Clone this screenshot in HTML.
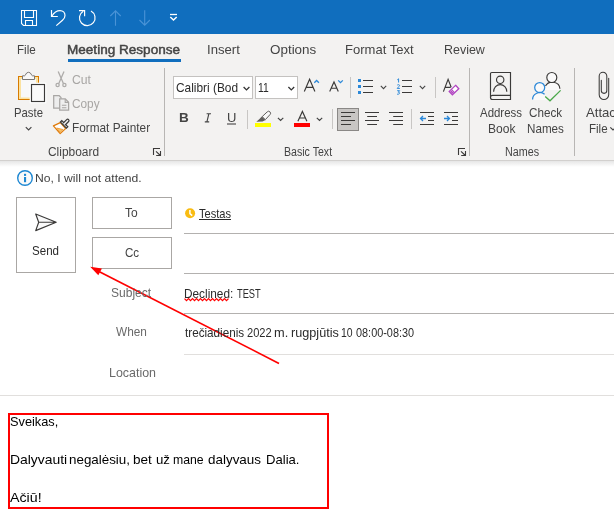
<!DOCTYPE html>
<html><head><meta charset="utf-8"><title>Meeting Response</title>
<style>
html,body{margin:0;padding:0;}
body{width:614px;height:514px;overflow:hidden;background:#fff;position:relative;font-family:"Liberation Sans",sans-serif;}
.t{position:absolute;white-space:nowrap;line-height:1;transform-origin:0 0;font-family:"Liberation Sans",sans-serif;}
.a{position:absolute;}
svg{position:absolute;overflow:visible;}
</style></head><body>
<!-- backgrounds -->
<div class="a" style="left:0;top:0;width:614px;height:34px;background:#106ebe"></div>
<div class="a" style="left:0;top:34px;width:614px;height:126px;background:#f3f2f1"></div>
<div class="a" style="left:0;top:160px;width:614px;height:1px;background:#d2d0ce"></div>
<div class="a" style="left:0;top:161px;width:614px;height:6px;background:linear-gradient(#e6e6e6,#fff)"></div>
<!-- active tab underline -->
<div class="a" style="left:68px;top:59px;width:113px;height:3px;background:#106ebe"></div>

<!-- title bar icons -->
<svg width="614" height="34" style="left:0;top:0" fill="none" stroke="#fff" stroke-width="1.1">
  <!-- save -->
  <path d="M21.5 10.5 H36.5 V25.5 H23.5 L21.5 23.5 Z"/>
  <path d="M24.5 10.5 V17.5 H33.5 V10.5"/>
  <path d="M25.5 25.5 V20.5 H32.5 V25.5"/>
  <!-- undo -->
  <path d="M51.5 10 V16.5 H57.8" stroke-width="1.2"/>
  <path d="M51.8 16.2 C54 12.5 57 10.6 60 10.6 C63 10.6 65 12.8 65 15.5 C65 17.5 64 19 62.5 20.3 L56.3 25.6" stroke-width="1.2"/>
  <!-- redo -->
  <path d="M79 10.6 H84.6 V16.2" stroke-width="1.2"/>
  <path d="M91 11 A7.8 7.8 0 1 1 83.2 11.2" stroke-width="1.2"/>
  <!-- up/down dimmed -->
  <g stroke="#4a93d6" stroke-width="1.1">
    <path d="M115.5 25.7 V10.8 M110.3 16 L115.5 10.8 L120.7 16"/>
    <path d="M144.7 10.2 V25.2 M139.5 20 L144.7 25.2 L149.9 20"/>
  </g>
  <!-- customize -->
  <path d="M170 14.5 H177" stroke-width="1.3"/>
  <path d="M170.3 17 L173.5 20 L176.7 17" stroke-width="1.5"/>
</svg>

<!-- ribbon icons -->
<svg width="614" height="126" style="left:0;top:34px" viewBox="0 34 614 126" fill="none">
  <!-- group separators -->
  <g stroke="#c8c6c4" stroke-width="1">
    <path d="M164.5 68 V156 M469.5 68 V156 M574.5 68 V156" stroke="#b8b6b4"/>
    <path d="M247.5 110 V129 M332.5 109 V129 M411.5 109 V129 M350.5 77 V98 M435.5 77 V98"/>
  </g>
  <!-- paste: clipboard -->
  <rect x="18.5" y="76.5" width="20" height="23" fill="#fbe2a0" stroke="#d87b00" stroke-width="1"/>
  <rect x="21" y="79" width="15" height="18.5" fill="#f8f8f8"/>
  <path d="M22.5 79.5 V75.8 H24.6 C25.8 75.8 25.6 72.3 28.5 72.3 C31.4 72.3 31.2 75.8 32.4 75.8 H34.5 V79.5 Z" fill="#f8f8f8" stroke="#797775" stroke-width="1"/>
  <rect x="30.5" y="83.5" width="15" height="19" fill="#fff" stroke="#fff" stroke-width="1.6"/>
  <rect x="31.5" y="84.5" width="13" height="17" fill="#fafafa" stroke="#3b3a39" stroke-width="1.15"/>
  <!-- paste chevron -->
  <path d="M25.8 127.2 L28.6 130 L31.4 127.2" stroke="#444" stroke-width="1.15"/>
  <!-- scissors -->
  <g stroke="#aeacaa" stroke-width="1.3">
    <path d="M58.2 71.5 L63.4 83.6 M64 71.5 L58.8 83.6"/>
    <circle cx="57.6" cy="85" r="1.6"/><circle cx="64.4" cy="85" r="1.6"/>
  </g>
  <!-- copy -->
  <g stroke="#a9a7a5" stroke-width="1.25">
    <path d="M59.5 108 H53.7 V95.7 H59.2 L61 97.5 V99" fill="#ededed"/>
    <path d="M59.7 98.8 H65.3 L68.6 102.2 V110 H59.7 Z" fill="#efefef"/>
    <path d="M65.2 99 V102.4 H68.4" stroke-width="1.1"/>
    <path d="M61.9 105.3 H66.4 M61.9 107.7 H66.4" stroke-width="1.05"/>
  </g>
  <!-- format painter -->
  <path d="M60.3 122.6 L53.4 125.9 L60.2 133.6 L65.6 128.6 Z" fill="#fff" stroke="#e07b0a" stroke-width="1.2" stroke-linejoin="round"/>
  <path d="M56.5 128 L63 129.5 L60.2 132.5 Z" fill="#f9c56a" stroke="#e8902a" stroke-width="0.8"/>
  <path d="M60.4 122 L61.8 120.7 L67.8 126.8 L66.4 128.1 Z" fill="#f3f2f1" stroke="#3b3a39" stroke-width="1.2"/>
  <path d="M63.2 123 L66.7 119.6 A1.3 1.3 0 0 1 68.6 121.5 L65.2 125" fill="#f3f2f1" stroke="#3b3a39" stroke-width="1.2"/>
  <!-- dialog launchers -->
  <g stroke="#3b3a39" stroke-width="1.1">
    <path d="M153.5 155 V148.5 H160 M156 151.3 L160.4 155.5 M160.5 151 V155.5 H156.2"/>
    <path d="M458.5 155 V148.5 H465 M461 151.3 L465.4 155.5 M465.5 151 V155.5 H461.2"/>
  </g>
  <!-- font combos -->
  <rect x="173.5" y="76.5" width="79" height="22" fill="#fff" stroke="#c4c2c0"/>
  <rect x="255.5" y="76.5" width="42" height="22" fill="#fff" stroke="#c4c2c0"/>
  <path d="M243.6 87 L246.5 89.9 L249.4 87 M288.4 87 L291.3 89.9 L294.2 87" stroke="#333" stroke-width="1.3"/>
  <!-- grow / shrink font -->
  <g stroke="#3b3a39" stroke-width="1.15">
    <path d="M304.3 91.6 L309.6 79.2 L314.9 91.6 M306.2 87.3 H313"/>
    <path d="M329.7 91.6 L334 82 L338.3 91.6 M331.3 88.2 H336.7"/>
  </g>
  <path d="M314.3 82.8 L316.6 80.5 L318.9 82.8 M338.2 80.4 L340.5 82.7 L342.8 80.4" stroke="#2b88d8" stroke-width="1.3"/>
  <!-- bullets -->
  <g fill="#2b88d8"><rect x="358" y="79" width="3" height="3"/><rect x="358" y="85" width="3" height="3"/><rect x="358" y="91" width="3" height="3"/></g>
  <path d="M363 80.5 H373 M363 86.5 H373 M363 92.5 H373 M402 80.5 H412 M402 86.5 H412 M402 92.5 H412" stroke="#3b3a39" stroke-width="1.1"/>
  <path d="M380.8 85.9 L383.5 88.6 L386.2 85.9 M419.8 85.9 L422.5 88.6 L425.2 85.9" stroke="#444" stroke-width="1.1"/>
  <!-- numbering digits -->
  <g stroke="#2b88d8" stroke-width="1" >
    <path d="M397.3 79.8 L398.6 78.8 V82.5"/>
    <path d="M397.2 85.3 C397.6 84.4 399.6 84.4 399.6 85.6 C399.6 86.6 397.4 87.4 397.2 88.4 H399.9"/>
    <path d="M397.2 90.7 H399.6 L398.3 92.2 C400.3 92.2 400.3 94.5 397.1 94.2"/>
  </g>
  <!-- clear formatting -->
  <path d="M443.4 91.6 L448.1 79.3 L451.2 87.2 M445.2 87.3 H450.6" stroke="#3b3a39" stroke-width="1.15"/>
  <path d="M455.6 85.3 L458.8 88.7 L452.4 94.8 L449.2 91.4 Z" fill="#fff" stroke="#b146c2" stroke-width="1.3"/>
  <path d="M451.4 89.4 L454.6 92.8" stroke="#b146c2" stroke-width="1.2"/>
  <path d="M450.2 91.4 L452.4 93.7 L453.5 92.7 L451.3 90.4 Z" fill="#b146c2"/>
  <!-- B I U underline for U -->
  <path d="M227 124 H236" stroke="#444" stroke-width="1.1"/>
  <path d="M206.6 113.7 H211 M204.8 121.9 H209.2 M208.9 113.7 L206.9 121.9" stroke="#444" stroke-width="1.15"/>
  <!-- highlighter -->
  <rect x="255" y="123" width="16" height="4" fill="#ffff00"/>
  <path d="M262.2 116.6 L267.2 111.9 A1.9 1.9 0 0 1 270 114.6 L265.3 119.7 Z" fill="#f8f8f8" stroke="#605e5c" stroke-width="1"/>
  <path d="M256.3 121.8 L259.2 119.3 L261.8 116.4 L265.5 120.1 L262.6 121.6 Z" fill="#605e5c"/>
  <path d="M277.9 117.8 L280.6 120.5 L283.3 117.8 M316.8 117.8 L319.5 120.5 L322.2 117.8" stroke="#444" stroke-width="1.15"/>
  <!-- font colour -->
  <rect x="294" y="123" width="16" height="4" fill="#ff0000"/>
  <path d="M297.9 121.3 L302.4 111.4 L306.9 121.3 M299.5 118 H305.3" stroke="#3b3a39" stroke-width="1.15"/>
  <!-- align -->
  <rect x="337.5" y="108.5" width="21" height="22" fill="#c8c6c4" stroke="#8a8886"/>
  <g stroke="#3b3a39" stroke-width="1.15">
    <path d="M341 112.5 H355 M341 116.5 H351 M341 120.5 H355 M341 124.5 H351"/>
    <path d="M365 112.5 H379 M367.2 116.5 H377 M365 120.5 H379 M367.2 124.5 H377"/>
    <path d="M389 112.5 H403 M393.2 116.5 H403 M389 120.5 H403 M393.2 124.5 H403"/>
    <path d="M420 112.5 H434 M428 116.5 H434 M428 120.5 H434 M420 124.5 H434"/>
    <path d="M444 112.5 H458 M452 116.5 H458 M452 120.5 H458 M444 124.5 H458"/>
  </g>
  <g stroke="#2b88d8" stroke-width="1.3">
    <path d="M420.5 118.5 H426 M423 116 L420.5 118.5 L423 121"/>
    <path d="M444 118.5 H449.5 M447 116 L449.5 118.5 L447 121"/>
  </g>
  <!-- address book -->
  <g stroke="#3b3a39" stroke-width="1.15">
    <path d="M491.8 72.5 H510.5 V99.5 H492.5 A2 2 0 0 1 490.5 97.5 V73.8 A1.3 1.3 0 0 1 491.8 72.5 Z"/>
    <path d="M510.5 95.3 H492.5 A2 2 0 0 0 490.5 97.3"/>
    <circle cx="500.2" cy="79.8" r="3.7"/>
    <path d="M493.6 91.8 A6.6 7.2 0 0 1 506.8 91.8"/>
  </g>
  <!-- check names -->
  <path d="M543.8 90 A8 8.6 0 0 1 559.8 90 Z" fill="#fafafa" stroke="none"/>
  <path d="M545.5 86 A7.6 7 0 0 1 559.9 88.8" stroke="#3b3a39" stroke-width="1.15"/>
  <circle cx="551.8" cy="77.5" r="5" fill="#fafafa" stroke="#3b3a39" stroke-width="1.15"/>
  <path d="M532.5 100 A7.3 7.3 0 0 1 547 100 Z" fill="#fafafa" stroke="none"/>
  <circle cx="539.7" cy="87.6" r="5" fill="#fafafa" stroke="#2b88d8" stroke-width="1.25"/>
  <path d="M532.6 99.6 A7.2 6.8 0 0 1 544.6 94.3" stroke="#2b88d8" stroke-width="1.25"/>
  <path d="M545.2 96.5 L550 100.8 L560.6 90.4" stroke="#4aa84a" stroke-width="1.3"/>
  <!-- paperclip -->
  <path d="M608.7 78.2 V94.7 A4.75 4.75 0 0 1 599.2 94.7 V76.1 A3.8 3.8 0 0 1 606.8 76.1 V90.6 A2.75 2.75 0 0 1 601.3 90.6 V80.3" stroke="#3b3a39" stroke-width="1.05" stroke-linecap="round"/>
  <path d="M610.3 127.3 L613 130 L615.7 127.3" stroke="#444" stroke-width="1.15"/>
</svg>

<!-- header -->
<svg width="614" height="240" style="left:0;top:166px" viewBox="0 166 614 240" fill="none">
  <circle cx="25" cy="178" r="7.3" fill="#fafafa" stroke="#1d87d2" stroke-width="1.4"/>
  <rect x="24" y="177" width="2.1" height="5.2" fill="#1d87d2"/><rect x="24" y="173.8" width="2.1" height="2.1" fill="#1d87d2"/>
  <rect x="16.5" y="197.5" width="59" height="75" fill="#fff" stroke="#aaa7a4"/>
  <rect x="92.5" y="197.5" width="79" height="31" fill="#fff" stroke="#aaa7a4"/>
  <rect x="92.5" y="237.5" width="79" height="31" fill="#fff" stroke="#aaa7a4"/>
  <path d="M35.7 214 L56.2 222.2 L35.7 230.6 L38.7 222.2 Z M38.7 222.2 H56" stroke="#3b3a39" stroke-width="1.15" stroke-linejoin="round" fill="#fafafa"/>
  <path d="M184 233.5 H614 M184 273.5 H614 M184 313.5 H614" stroke="#b3b1af"/>
  <path d="M184 354.5 H614 M0 395.5 H614" stroke="#e1dfdd"/>
  <circle cx="190.1" cy="213.2" r="5" fill="#f9bc12"/>
  <path d="M189.9 210 V213.6 L192.2 215.6" stroke="#fff" stroke-width="1.5" stroke-linejoin="round"/>
  <path d="M199 219.5 H231" stroke="#2b2b2b" stroke-width="1"/>
  <!-- squiggle -->
  <path d="M184.5 298.6 l2 2 l2 -2 l2 2 l2 -2 l2 2 l2 -2 l2 2 l2 -2 l2 2 l2 -2 l2 2 l2 -2 l2 2 l2 -2 l2 2 l2 -2 l2 2 l2 -2 l2 2 l2 -2 l2 2 l2 -2" stroke="#ff0000" stroke-width="1.25" stroke-linejoin="miter"/>
  <!-- arrow -->
  <path d="M279 363.4 L97 270.4" stroke="#ff0000" stroke-width="1.7"/>
  <path d="M90.2 266.8 L101.9 268.4 L98.3 275.3 Z" fill="#ff0000"/>
</svg>
<!-- body red box -->
<div class="a" style="left:8px;top:413px;width:317px;height:92px;border:2px solid #f00"></div>

<div id="tx" style="position:absolute;left:0;top:0;width:614px;height:514px;will-change:transform">
<span id="t0" class="t" style="left:17.00px;top:43.00px;font-size:13px;transform:scaleX(0.8948);color:#444444">File</span>
<span id="t1" class="t" style="left:67.00px;top:43.00px;font-size:13px;transform:scaleX(1.0429);color:#444444;-webkit-text-stroke:0.45px #444444">Meeting Response</span>
<span id="t2" class="t" style="left:207.00px;top:43.00px;font-size:13px;transform:scaleX(1.0094);color:#444444">Insert</span>
<span id="t3" class="t" style="left:270.00px;top:43.00px;font-size:13px;transform:scaleX(1.0322);color:#444444">Options</span>
<span id="t4" class="t" style="left:345.00px;top:43.00px;font-size:13px;transform:scaleX(1.0027);color:#444444">Format Text</span>
<span id="t5" class="t" style="left:444.00px;top:43.00px;font-size:13px;transform:scaleX(0.9584);color:#444444">Review</span>
<span id="t6" class="t" style="left:14.00px;top:106.00px;font-size:13px;transform:scaleX(0.8699);color:#444444">Paste</span>
<span id="t7" class="t" style="left:72.00px;top:73.00px;font-size:13px;transform:scaleX(0.9363);color:#a8a6a4">Cut</span>
<span id="t8" class="t" style="left:72.00px;top:97.00px;font-size:13px;transform:scaleX(0.9099);color:#a8a6a4">Copy</span>
<span id="t9" class="t" style="left:72.00px;top:121.00px;font-size:13px;transform:scaleX(0.9084);color:#444444">Format Painter</span>
<span id="t10" class="t" style="left:48.00px;top:146.00px;font-size:12.5px;transform:scaleX(0.9537);color:#444444">Clipboard</span>
<span id="t11" class="t" style="left:176.00px;top:81.00px;font-size:13px;transform:scaleX(0.9138);color:#2b2b2b">Calibri (Bod</span>
<span id="t12" class="t" style="left:258.00px;top:81.00px;font-size:13px;transform:scaleX(0.7952);color:#2b2b2b">11</span>
<span id="t13" class="t" style="left:179.00px;top:111.00px;font-size:13.5px;transform:scaleX(1.0000);color:#444444;font-weight:bold">B</span>
<span id="t14" class="t" style="left:227.00px;top:111.00px;font-size:13px;transform:scaleX(1.0000);color:#444444">U</span>
<span id="t15" class="t" style="left:284.00px;top:146.00px;font-size:12.5px;transform:scaleX(0.8477);color:#444444">Basic Text</span>
<span id="t16" class="t" style="left:480.00px;top:106.00px;font-size:13px;transform:scaleX(0.8794);color:#444444">Address</span>
<span id="t17" class="t" style="left:488.00px;top:122.00px;font-size:13px;transform:scaleX(0.9248);color:#444444">Book</span>
<span id="t18" class="t" style="left:529.00px;top:106.00px;font-size:13px;transform:scaleX(0.8977);color:#444444">Check</span>
<span id="t19" class="t" style="left:527.00px;top:122.00px;font-size:13px;transform:scaleX(0.8954);color:#444444">Names</span>
<span id="t20" class="t" style="left:505.00px;top:146.00px;font-size:12.5px;transform:scaleX(0.8593);color:#444444">Names</span>
<span id="t21" class="t" style="left:586.00px;top:106.00px;font-size:13px;transform:scaleX(1.0103);color:#444444">Attach</span>
<span id="t22" class="t" style="left:589.00px;top:122.00px;font-size:13px;transform:scaleX(0.8887);color:#444444">File</span>
<span id="t23" class="t" style="left:35.00px;top:173.00px;font-size:11.5px;transform:scaleX(1.0565);color:#444444">No, I will not attend.</span>
<span id="t24" class="t" style="left:32.00px;top:244.00px;font-size:13px;transform:scaleX(0.8887);color:#2b2b2b">Send</span>
<span id="t25" class="t" style="left:125.00px;top:206.00px;font-size:13px;transform:scaleX(0.9239);color:#444444">To</span>
<span id="t26" class="t" style="left:125.00px;top:246.00px;font-size:13px;transform:scaleX(0.8918);color:#444444">Cc</span>
<span id="t27" class="t" style="left:199.00px;top:207.00px;font-size:13px;transform:scaleX(0.8545);color:#2b2b2b">Testas</span>
<span id="t28" class="t" style="left:111.00px;top:286.00px;font-size:13px;transform:scaleX(0.9256);color:#6a6a6a">Subject</span>
<span id="t29" class="t" style="left:184.00px;top:287.00px;font-size:13px;transform:scaleX(0.9085);color:#2b2b2b">Declined:</span>
<span id="t30" class="t" style="left:237.00px;top:287.00px;font-size:13px;transform:scaleX(0.7142);color:#2b2b2b">TEST</span>
<span id="t31" class="t" style="left:116.00px;top:325.00px;font-size:13px;transform:scaleX(0.9084);color:#6a6a6a">When</span>
<span id="t32" class="t" style="left:185.00px;top:326.00px;font-size:13px;transform:scaleX(0.9002);color:#2b2b2b">trečiadienis</span>
<span id="t33" class="t" style="left:247.00px;top:326.00px;font-size:13px;transform:scaleX(0.8536);color:#2b2b2b">2022</span>
<span id="t34" class="t" style="left:274.00px;top:326.00px;font-size:13px;transform:scaleX(0.9845);color:#2b2b2b">m.</span>
<span id="t35" class="t" style="left:291.00px;top:326.00px;font-size:13px;transform:scaleX(0.9732);color:#2b2b2b">rugpjūtis</span>
<span id="t36" class="t" style="left:341.00px;top:326.00px;font-size:13px;transform:scaleX(0.8039);color:#2b2b2b">10</span>
<span id="t37" class="t" style="left:356.00px;top:326.00px;font-size:13px;transform:scaleX(0.8371);color:#2b2b2b">08:00-08:30</span>
<span id="t38" class="t" style="left:109.00px;top:366.00px;font-size:13px;transform:scaleX(0.9563);color:#6a6a6a">Location</span>
<span id="t39" class="t" style="left:10.00px;top:415.00px;font-size:13.5px;transform:scaleX(0.9470);color:#000">Sveikas,</span>
<span id="t40" class="t" style="left:10.00px;top:453.00px;font-size:13.5px;transform:scaleX(1.0301);color:#000">Dalyvauti</span>
<span id="t41" class="t" style="left:69.00px;top:453.00px;font-size:13.5px;transform:scaleX(0.9908);color:#000">negalėsiu,</span>
<span id="t42" class="t" style="left:133.00px;top:453.00px;font-size:13.5px;transform:scaleX(1.0034);color:#000">bet</span>
<span id="t43" class="t" style="left:156.00px;top:453.00px;font-size:13.5px;transform:scaleX(0.9809);color:#000">už</span>
<span id="t44" class="t" style="left:173.00px;top:453.00px;font-size:13.5px;transform:scaleX(0.9059);color:#000">mane</span>
<span id="t45" class="t" style="left:208.00px;top:453.00px;font-size:13.5px;transform:scaleX(0.9954);color:#000">dalyvaus</span>
<span id="t46" class="t" style="left:266.00px;top:453.00px;font-size:13.5px;transform:scaleX(0.9698);color:#000">Dalia.</span>
<span id="t47" class="t" style="left:10.00px;top:491.00px;font-size:13.5px;transform:scaleX(1.0535);color:#000">Ačiū!</span>
</div>
</body></html>
